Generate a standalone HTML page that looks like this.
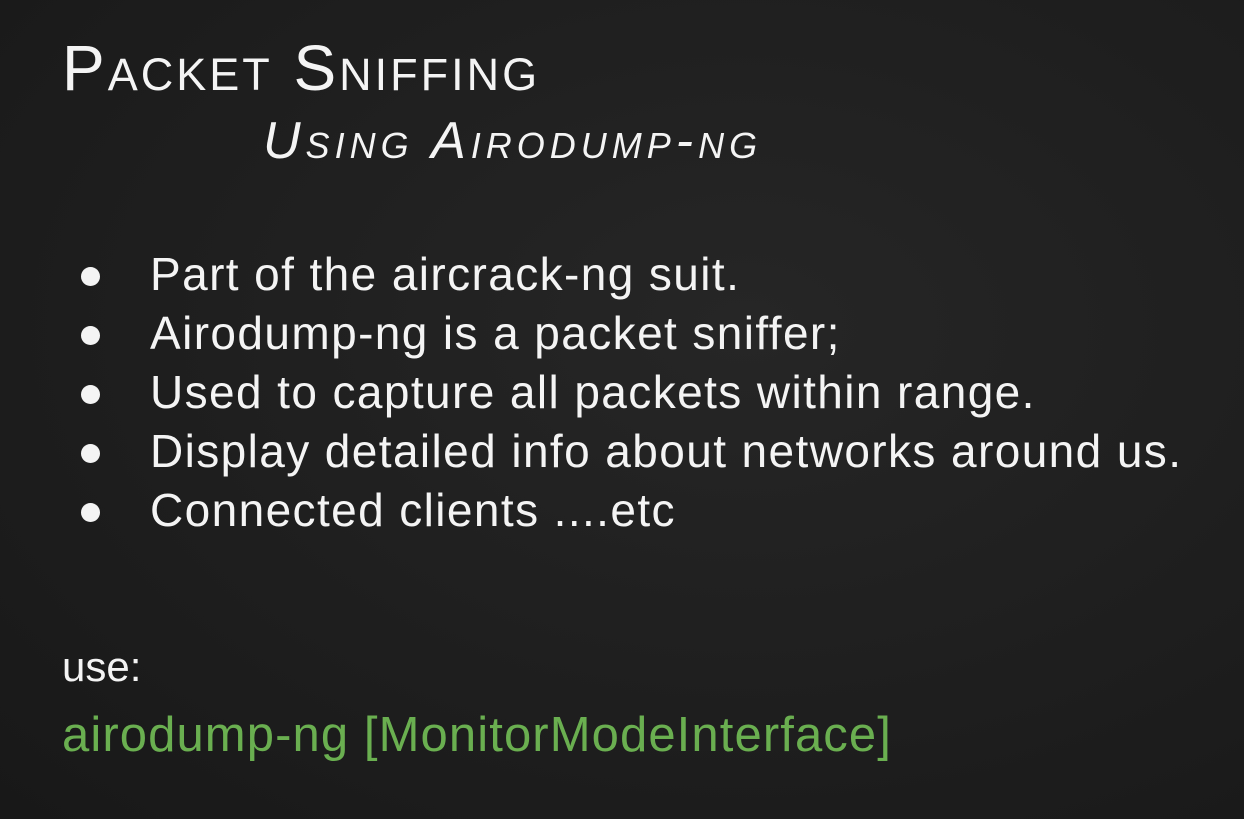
<!DOCTYPE html>
<html><head><meta charset="utf-8"><style>
html,body{margin:0;padding:0}
body{width:1244px;height:819px;overflow:hidden;position:relative;background:radial-gradient(ellipse at 60% 40%,#262626 0%,#1f1f1f 50%,#181818 100%);font-family:"Liberation Sans",sans-serif;color:#f4f4f4}
.t{position:absolute;white-space:nowrap;line-height:1}
.title{left:62px;top:36px;font-size:64px;font-variant:small-caps;letter-spacing:3px}
.sub{left:263px;top:115px;font-size:52px;font-variant:small-caps;font-style:italic;letter-spacing:5px}
.b{left:150px;font-size:46px;letter-spacing:1.4px}
.dot{position:absolute;left:81px;width:19px;height:19px;border-radius:50%;background:#f4f4f4}
.use{left:62px;top:646px;font-size:42px}
.cmd{left:62px;top:711px;font-size:49px;color:#6aaf50;letter-spacing:1.1px}
</style></head><body>
<div class="t title">Packet Sniffing</div>
<div class="t sub">Using Airodump-ng</div>
<div class="dot" style="top:267px"></div><div class="t b" style="top:251px">Part of the aircrack-ng suit.</div>
<div class="dot" style="top:326px"></div><div class="t b" style="top:310px">Airodump-ng is a packet sniffer;</div>
<div class="dot" style="top:385px"></div><div class="t b" style="top:369px">Used to capture all packets within range.</div>
<div class="dot" style="top:444px"></div><div class="t b" style="top:428px">Display detailed info about networks around us.</div>
<div class="dot" style="top:503px"></div><div class="t b" style="top:487px">Connected clients ....etc</div>
<div class="t use">use:</div>
<div class="t cmd">airodump-ng [MonitorModeInterface]</div>
</body></html>
